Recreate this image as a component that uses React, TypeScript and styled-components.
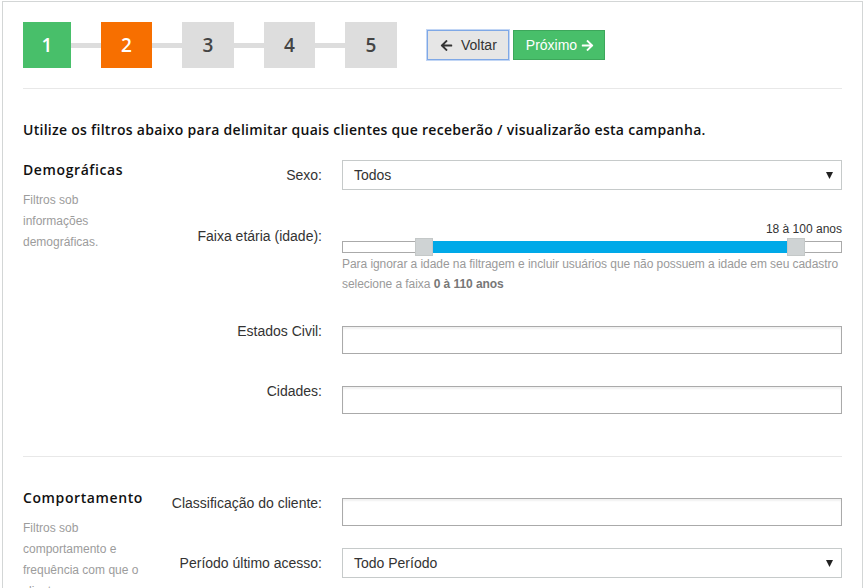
import styled, { createGlobalStyle } from 'styled-components';
import { FaArrowLeft, FaArrowRight } from 'react-icons/fa';


const GlobalStyle = createGlobalStyle`
    body {
        margin: 0;
        background: #fff;
        font-family: "Liberation Sans", Arial, sans-serif;
        color: #333;
    }
`;

const Card = styled.div`
    margin: 1px 4px 0 2px;
    border: 1px solid #d3d6d6;
    padding: 20px 20px 40px;
    background: #fff;
`;

const Toolbar = styled.div`
    display: flex;
    align-items: center;
    height: 46px;
`;

const Step = styled.div<{ $color: string; $w: number }>`
    width: ${p => p.$w}px;
    height: 46px;
    display: flex;
    align-items: center;
    justify-content: center;
    background: ${p => p.$color};
    color: ${p => (p.$color === '#dddddd' ? '#444' : '#fff')};
    font-family: "Open Sans", "DejaVu Sans", sans-serif;
    font-weight: 600;
    font-size: 19px;
`;

const StepLine = styled.div`
    width: 30px;
    height: 5px;
    background: #dddddd;
`;

const Buttons = styled.div`
    display: flex;
    gap: 4px;
    margin-left: 30px;
`;

const Button = styled.button<{ $primary?: boolean }>`
    height: 30px;
    box-sizing: border-box;
    display: flex;
    align-items: center;
    gap: ${p => (p.$primary ? 4 : 8)}px;
    padding: 0 ${p => (p.$primary ? 10 : 11)}px 0 12px;
    font-family: "Liberation Sans", Arial, sans-serif;
    font-size: 14px;
    border-radius: 0;
    background: ${p => (p.$primary ? '#48bf6a' : '#e6e6e6')};
    color: ${p => (p.$primary ? '#fff' : '#333')};
    border: 1px solid ${p => (p.$primary ? '#3da75b' : '#7fa8e6')};
    box-shadow: ${p => (p.$primary ? 'none' : '0 0 0 1px #c2d6f5')};
    svg {
        font-size: 13px;
    }
`;

const Divider = styled.hr`
    border: 0;
    border-top: 1px solid #e8e8e8;
    margin: 20px 0 0;
`;

const Heading = styled.h1`
    margin: 31px 0 20px;
    font-family: "Open Sans", "DejaVu Sans", sans-serif;
    font-weight: 600;
    font-size: 14px;
    line-height: 20px;
    letter-spacing: 0.28px;
    color: #111;
`;

const Section = styled.div<{ $top?: number }>`
    display: grid;
    grid-template-columns: 118px 1fr;
    column-gap: 20px;
    margin-top: ${p => p.$top || 0}px;
    padding-bottom: 42px;
`;

const Side = styled.div``;

const SideTitle = styled.h2`
    margin: 0;
    font-family: "Open Sans", "DejaVu Sans", sans-serif;
    font-weight: 600;
    font-size: 14px;
    line-height: 20px;
    letter-spacing: 0.6px;
    white-space: nowrap;
    color: #111;
`;

const SideText = styled.p`
    margin: 10px 0 0;
    font-size: 12px;
    line-height: 21px;
    color: #9c9c9c;
`;

const Fields = styled.div``;

const FieldRow = styled.div<{ $top?: number }>`
    display: grid;
    grid-template-columns: 1fr 500px;
    column-gap: 20px;
    margin-top: ${p => (p.$top === undefined ? 22 : p.$top)}px;
`;

const Label = styled.label`
    padding-top: 5px;
    text-align: right;
    white-space: nowrap;
    font-size: 14px;
    line-height: 20px;
    color: #333;
`;

const Select = styled.div`
    height: 30px;
    box-sizing: border-box;
    border: 1px solid #c6caca;
    display: flex;
    align-items: center;
    justify-content: space-between;
    padding: 0 8px 0 11px;
    font-size: 14px;
    color: #333;
`;

const TagInput = styled.div`
    margin-top: 10px;
    height: 28px;
    box-sizing: border-box;
    border: 1px solid #aaaaaa;
    box-shadow: inset 0 2px 2px rgba(0, 0, 0, 0.06);
`;

const Amount = styled.div`
    text-align: right;
    font-size: 12px;
    line-height: 16px;
    color: #333;
`;

const Track = styled.div`
    position: relative;
    margin-top: 4px;
    height: 12px;
    box-sizing: border-box;
    border: 1px solid #aaaaaa;
    background: #fff;
`;

const Range = styled.div`
    position: absolute;
    top: -1px;
    bottom: -1px;
    background: #00a9e8;
`;

const Handle = styled.div`
    position: absolute;
    top: -4px;
    width: 18px;
    height: 18px;
    margin-left: -9px;
    box-sizing: border-box;
    border: 1px solid #c4c8c8;
    background: #cfd3d4;
`;

const Help = styled.p`
    margin: 1px 0 0;
    font-size: 12px;
    line-height: 20px;
    letter-spacing: -0.06px;
    color: #9a9a9a;
    b {
        color: #777;
    }
`;

const Caret = () => (
    <svg width="7" height="7" viewBox="0 0 7 7">
        <path d="M0 0 H7 L3.5 7 Z" fill="#222" />
    </svg>
);


const steps = [
    { n: 1, color: '#48bf6a', w: 48 },
    { n: 2, color: '#f76f00', w: 51 },
    { n: 3, color: '#dddddd', w: 52 },
    { n: 4, color: '#dddddd', w: 51 },
    { n: 5, color: '#dddddd', w: 52 },
];

const AgeSlider = ({ min, max }: { min: number, max: number }) => {
    const pos = (v: number) => (v / 110) * 100;
    return (
        <Track>
            <Range style={{ left: `${pos(min)}%`, width: `${pos(max) - pos(min)}%` }} />
            <Handle style={{ left: `${pos(min)}%` }} />
            <Handle style={{ left: `${pos(max)}%` }} />
        </Track>
    )
}

const App = () => {
    return (
        <>
            <GlobalStyle />
            <Card>
                <Toolbar>
                    {steps.map((s, i) => (
                        <>
                            {i > 0 && <StepLine key={'l' + s.n} />}
                            <Step key={s.n} $color={s.color} $w={s.w}>{s.n}</Step>
                        </>
                    ))}
                    <Buttons>
                        <Button><FaArrowLeft /> Voltar</Button>
                        <Button $primary>Próximo <FaArrowRight /></Button>
                    </Buttons>
                </Toolbar>
                <Divider />

                <Heading>Utilize os filtros abaixo para delimitar quais clientes que receberão / visualizarão esta campanha.</Heading>

                <Section>
                    <Side>
                        <SideTitle>Demográficas</SideTitle>
                        <SideText>Filtros sob informações demográficas.</SideText>
                    </Side>
                    <Fields>
                        <FieldRow $top={0}>
                            <Label>Sexo:</Label>
                            <Select>Todos<Caret /></Select>
                        </FieldRow>
                        <FieldRow $top={31}>
                            <Label>Faixa etária (idade):</Label>
                            <div>
                                <Amount>18 à 100 anos</Amount>
                                <AgeSlider min={18} max={100} />
                                <Help>
                                    Para ignorar a idade na filtragem e incluir usuários que não possuem a idade em seu cadastro selecione a faixa <b>0 à 110 anos</b>
                                </Help>
                            </div>
                        </FieldRow>
                        <FieldRow>
                            <Label>Estados Civil:</Label>
                            <TagInput />
                        </FieldRow>
                        <FieldRow>
                            <Label>Cidades:</Label>
                            <TagInput />
                        </FieldRow>
                    </Fields>
                </Section>
                <Divider style={{ marginTop: 0 }} />

                <Section $top={31}>
                    <Side>
                        <SideTitle>Comportamento</SideTitle>
                        <SideText>Filtros sob comportamento e frequência com que o cliente usa o aplicativo.</SideText>
                    </Side>
                    <Fields>
                        <FieldRow $top={0}>
                            <Label>Classificação do cliente:</Label>
                            <TagInput />
                        </FieldRow>
                        <FieldRow>
                            <Label>Período último acesso:</Label>
                            <Select>Todo Período<Caret /></Select>
                        </FieldRow>
                    </Fields>
                </Section>
            </Card>
        </>
    )
}

export default App;
